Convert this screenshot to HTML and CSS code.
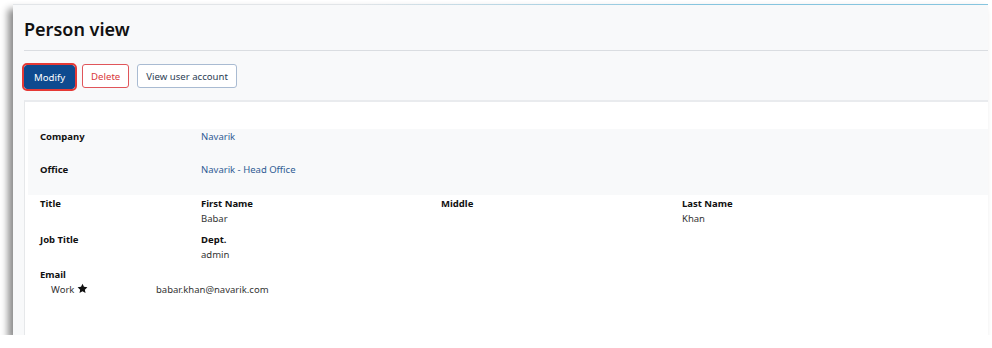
FILE: index.html
```html
<!DOCTYPE html>
<html lang="en">
	<head>
		<meta name="viewport" content="width=device-width, initial-scale=1">
		<link rel="stylesheet" href="styles.css">
	</head>

	<body>
		<div class="window">
			<div class="page">
				<h1 class="page-title">Person view</h1>
				<div class="actions">
					<button class="btn btn-primary">Modify</button>
					<button class="btn btn-danger">Delete</button>
					<button class="btn btn-plain">View user account</button>
				</div>

				<div class="card">
					<div class="row striped">
						<div class="col-2 label">Company</div>
						<div class="col-3"><a href="#">Navarik</a></div>
					</div>
					<div class="row striped">
						<div class="col-2 label">Office</div>
						<div class="col-3"><a href="#">Navarik - Head Office</a></div>
					</div>

					<div class="row fields">
						<div class="col-2">
							<div class="label">Title</div>
						</div>
						<div class="col-3">
							<div class="label">First Name</div>
							<div class="value">Babar</div>
						</div>
						<div class="col-3">
							<div class="label">Middle</div>
						</div>
						<div class="col-3">
							<div class="label">Last Name</div>
							<div class="value">Khan</div>
						</div>
					</div>
					<div class="row fields">
						<div class="col-2">
							<div class="label">Job Title</div>
						</div>
						<div class="col-3">
							<div class="label">Dept.</div>
							<div class="value">admin</div>
						</div>
					</div>

					<div class="email">
						<div class="label">Email</div>
						<div class="email-line">
							<span class="email-kind">Work
								<svg class="star" viewBox="0 0 24 24" width="11" height="11"><path d="M12 1.5l3.2 6.9 7.5.9-5.6 5.2 1.5 7.4L12 18.2l-6.6 3.7 1.5-7.4L1.3 9.3l7.5-.9z"/></svg>
							</span>
							<span class="value">babar.khan@navarik.com</span>
						</div>
					</div>
				</div>
			</div>
		</div>
	</body>
</html>
```

FILE: styles.css
```css
* {
	box-sizing: border-box;
}
html {
	background: #fff;
	font-family: "Noto Sans", "Open Sans", sans-serif;
	color: #1b1b1b;
}
body {
	margin: 0;
	padding: 4px 4px 0 13px;
}
.window {
	width: 975px;
	height: 331px;
	overflow: hidden;
	background: #f8f9fa;
	border-top: 1px solid;
	border-image: linear-gradient(to right, #e2e5e8 35%, #86c5df 70%) 1;
	box-shadow: -5px 5px 7px rgba(0, 0, 0, 0.45);
}
.page {
	padding: 0 0 0 11px;
}
.page-title {
	margin: 0;
	padding: 12px 0 8px;
	font-size: 18px;
	font-weight: 600;
	line-height: 25px;
	color: #111;
	border-bottom: 1px solid #dadde1;
}
.actions {
	display: flex;
	gap: 5px;
	padding: 13px 0 11px;
	margin-left: -2px;
}
.btn {
	font: inherit;
	font-size: 9.6px;
	height: 24px;
	padding: 0 8px;
	border-radius: 3px;
	background: #fff;
	color: #2c3d55;
	cursor: pointer;
}
.btn-primary {
	padding: 0 9px;
	background: #0e4a8f;
	color: #fff;
	border: 1px solid #0e4a8f;
	outline: 2px solid #e53935;
	outline-offset: 0;
	margin: 1px 2px 0;
}
.btn-danger {
	color: #d9383a;
	border: 1px solid #e0555a;
}
.btn-plain {
	margin-left: 3px;
	border: 1px solid #a9bbd2;
}
.card {
	background: #fff;
	border-top: 2px solid #e9ebee;
	border-left: 1px solid #e6e8ea;
	padding: 27px 0 0 3px;
	height: 240px;
	font-size: 9.5px;
	line-height: 15px;
}
.row {
	display: grid;
	grid-template-columns: 161px 240px 241px 240px;
}
.row > div {
	padding: 0 12px;
}
.striped {
	background: #f8f9fa;
	height: 33px;
}
.fields {
	padding-top: 1px;
	height: 36px;
}
.label {
	font-weight: 700;
	color: #111;
}
.value {
	color: #333;
}
a {
	color: #2f5b94;
	text-decoration: none;
}
.email {
	padding: 0 12px;
}
.email-line {
	display: flex;
}
.email-kind {
	width: 116px;
	padding-left: 11px;
	color: #333;
}
.star {
	vertical-align: -1px;
	fill: #111;
}
```
